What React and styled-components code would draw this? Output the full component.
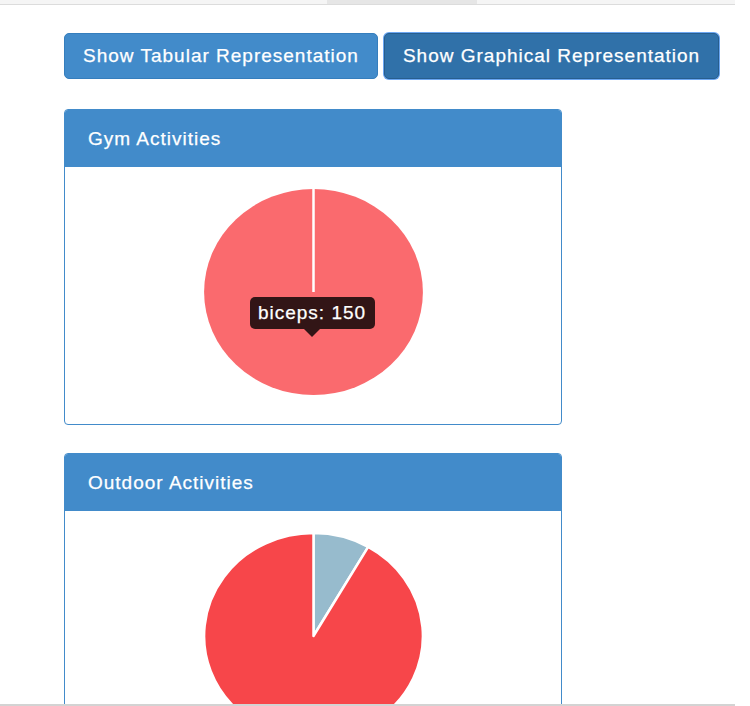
import React from "react";
import styled, { createGlobalStyle } from "styled-components";

const GlobalStyle = createGlobalStyle`
  html, body {
    margin: 0;
    padding: 0;
    background: #fff;
    font-family: "Liberation Sans", Arial, sans-serif;
  }
`;

const Frame = styled.div`
  width: 735px;
  height: 706px;
  display: flex;
  flex-direction: column;
  background: #fff;
`;

const TopStrip = styled.div`
  height: 4px;
  flex: none;
  background: #f5f5f5;
  border-bottom: 1px solid #dcdcdc;
  display: flex;
  padding-left: 327px;
`;

const StripTab = styled.div`
  width: 150px;
  background: #e6e6e6;
`;

const Content = styled.div`
  flex: 1;
  overflow: hidden;
  padding: 28px 0 0 64px;
`;

const BottomBar = styled.div`
  height: 2px;
  flex: none;
  background: #d3d3d3;
`;

const ButtonRow = styled.div`
  display: flex;
  align-items: center;
  gap: 6px;
  margin-bottom: 30px;
`;

const Button = styled.button`
  font-family: "Liberation Sans", Arial, sans-serif;
  font-size: 19px;
  letter-spacing: 1px;
  line-height: 24px;
  -webkit-text-stroke: 0.25px #fff;
  color: #fff;
  padding: 10px 18px;
  border-radius: 5px;
  cursor: pointer;
  white-space: nowrap;
  background: ${(p) => (p.$active ? "#3071a9" : "#428bca")};
  border: 1px solid ${(p) => (p.$active ? "#285e8e" : "#357ebd")};
  box-shadow: ${(p) => (p.$active ? "0 0 0 1px #6aa6f2" : "none")};
`;

const Panel = styled.div`
  width: 496px;
  border: 1px solid #428bca;
  border-radius: 4px;
  margin-bottom: 28px;
  overflow: hidden;
`;

const PanelHeading = styled.div`
  background: #428bca;
  color: #fff;
  font-size: 19px;
  letter-spacing: 1px;
  -webkit-text-stroke: 0.25px #fff;
  height: 57px;
  display: flex;
  align-items: center;
  padding: 0 23px;
`;

const PanelBody = styled.div`
  display: flex;
  justify-content: center;
  padding: 21px 0 28px;
`;

const ChartBox = styled.div`
  position: relative;
  width: 221px;
  height: 208px;
  svg {
    display: block;
  }
`;

const Tooltip = styled.div`
  position: absolute;
  left: 47px;
  top: 109px;
  width: 125px;
  height: 32px;
  box-sizing: border-box;
  background: rgba(0, 0, 0, 0.8);
  color: #fff;
  border-radius: 5px;
  font-size: 19px;
  letter-spacing: 1px;
  -webkit-text-stroke: 0.25px #fff;
  display: flex;
  align-items: center;
  justify-content: center;

  &::after {
    content: "";
    position: absolute;
    left: 54px;
    top: 32px;
    border-left: 8px solid transparent;
    border-right: 8px solid transparent;
    border-top: 8px solid rgba(0, 0, 0, 0.8);
  }
`;

const slice = (from, to) => {
  const a0 = (from * Math.PI) / 180;
  const a1 = (to * Math.PI) / 180;
  const x0 = 100 * Math.sin(a0);
  const y0 = -100 * Math.cos(a0);
  const x1 = 100 * Math.sin(a1);
  const y1 = -100 * Math.cos(a1);
  const large = to - from > 180 ? 1 : 0;
  return `M0,0 L${x0},${y0} A100,100 0 ${large} 1 ${x1},${y1} Z`;
};

const Pie = ({ slices, children }) => (
  <ChartBox>
    <svg width="221" height="208" viewBox="-101 -101 202 202" preserveAspectRatio="none">
      {slices.map((s, i) =>
        s.to - s.from >= 360 ? (
          <g key={i}>
            <circle r="100" fill={s.color} />
            <line x1="0" y1="0" x2="0" y2="-101" stroke="#fff" strokeWidth="2.5" vectorEffect="non-scaling-stroke" />
          </g>
        ) : (
          <path
            key={i}
            d={slice(s.from, s.to)}
            fill={s.color}
            stroke="#fff"
            strokeWidth="2.5"
            strokeLinejoin="round"
            vectorEffect="non-scaling-stroke"
          />
        )
      )}
    </svg>
    {children}
  </ChartBox>
);

export default function App() {
  return (
    <Frame>
      <GlobalStyle />
      <TopStrip>
        <StripTab />
      </TopStrip>
      <Content>
        <ButtonRow>
          <Button>Show Tabular Representation</Button>
          <Button $active>Show Graphical Representation</Button>
        </ButtonRow>

        <Panel>
          <PanelHeading>Gym Activities</PanelHeading>
          <PanelBody>
            <Pie slices={[{ from: 0, to: 360, color: "#fa6a6e" }]}>
              <Tooltip>biceps: 150</Tooltip>
            </Pie>
          </PanelBody>
        </Panel>

        <Panel>
          <PanelHeading>Outdoor Activities</PanelHeading>
          <PanelBody>
            <Pie
              slices={[
                { from: 0, to: 30, color: "#97bbcd" },
                { from: 30, to: 360, color: "#f7464a" },
              ]}
            />
          </PanelBody>
        </Panel>
      </Content>
      <BottomBar />
    </Frame>
  );
}
